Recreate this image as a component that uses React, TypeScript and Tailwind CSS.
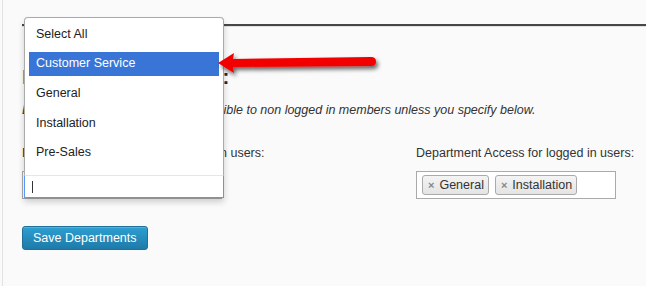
const options = ["Select All", "Customer Service", "General", "Installation", "Pre-Sales"];

const Chip = ({ label }: { label: string }) => (
  <span className="flex items-center h-[20px] pl-[5px] pr-[4px] gap-[5px] border border-[#aaa] rounded-[3px] bg-gradient-to-b from-[#f4f4f4] to-[#e4e4e4] text-[12.5px] text-[#333] leading-none">
    <span className="text-[#888] text-[11px] font-bold">×</span>
    {label}
  </span>
);

const Arrow = () => (
  <svg
    className="absolute left-[208px] top-[44px]"
    width="180"
    height="40"
    viewBox="0 0 180 40"
  >
    <defs>
      <filter id="sh" x="-10%" y="-50%" width="120%" height="200%">
        <feDropShadow dx="2" dy="3" stdDeviation="2" floodColor="#000" floodOpacity="0.6" />
      </filter>
    </defs>
    <path
      d="M10 19 L26 9 L25 15 L163 13 Q168 13 168 17.5 Q168 22 163 22 L25 23 L26 29 Z"
      fill="#f20000"
      filter="url(#sh)"
    />
  </svg>
);

const Dropdown = () => (
  <div className="absolute left-[24px] top-[17px] w-[200px] h-[181px] flex flex-col bg-white border border-[#aaa] border-b-0 rounded-t-[4px] shadow-[0_4px_6px_rgba(0,0,0,0.18)]">
    <ul className="flex-1 flex flex-col pt-[4px] px-[4px]">
      {options.map((o, i) => (
        <li
          key={o}
          className={
            "h-[24px] mb-[5.7px] pl-[7px] flex items-center text-[12.5px] " +
            (i === 1 ? "bg-[#3875d7] text-white" : "text-[#222]")
          }
        >
          {o}
        </li>
      ))}
    </ul>
    <div className="h-[23px] -mx-px border border-[#5897fb] border-t-[#e6e6e6] bg-white flex items-center pl-[7px]">
      <span className="w-px h-[12px] bg-[#333]" />
    </div>
  </div>
);

export default function App() {
  return (
    <div
      className="w-[646px] h-[286px] bg-[#fafafa] overflow-hidden relative"
      style={{ fontFamily: '"Liberation Sans", Arial, sans-serif' }}
    >
      <div className="ml-[2px] h-full border-l border-[#e2e2e2] pl-[19px]">
        <div className="pt-[24px]">
          <div className="h-[2px] bg-[#474747]" />
          <div className="h-px bg-[#e0e0e0]" />
        </div>
        <h2 className="mt-[39px] text-[20.5px] font-bold leading-[21px] text-[#23282d]">
          <span className="text-[#b4671c]">D</span>epartment Settings:
        </h2>
        <p className="mt-[15px] text-[12.5px] italic text-[#333] leading-[16px]">
          By default all departments will be visible to non logged in members unless you specify below.
        </p>
        <div className="mt-[27px] flex">
          <div className="w-[394px] flex flex-col">
            <span className="text-[12.5px] text-[#333] leading-[16px]">Department Access for non logged in users:</span>
            <div className="mt-[10px] w-[200px] h-[28px] bg-white border border-[#aaa]" />
          </div>
          <div className="flex flex-col">
            <span className="text-[12.5px] text-[#333] leading-[16px]">Department Access for logged in users:</span>
            <div className="mt-[10px] w-[200px] h-[28px] bg-white border border-[#aaa] flex items-center gap-[6px] pl-[5px]">
              <Chip label="General" />
              <Chip label="Installation" />
            </div>
          </div>
        </div>
        <button className="mt-[27px] h-[24px] px-[10px] rounded-[3px] border border-[#1f6f96] bg-gradient-to-b from-[#2e9fd2] to-[#1e7aa8] text-white text-[12.5px] leading-none shadow-[inset_0_1px_0_rgba(120,200,230,0.5)]">
          Save Departments
        </button>
      </div>
      <Dropdown />
      <Arrow />
    </div>
  );
}
